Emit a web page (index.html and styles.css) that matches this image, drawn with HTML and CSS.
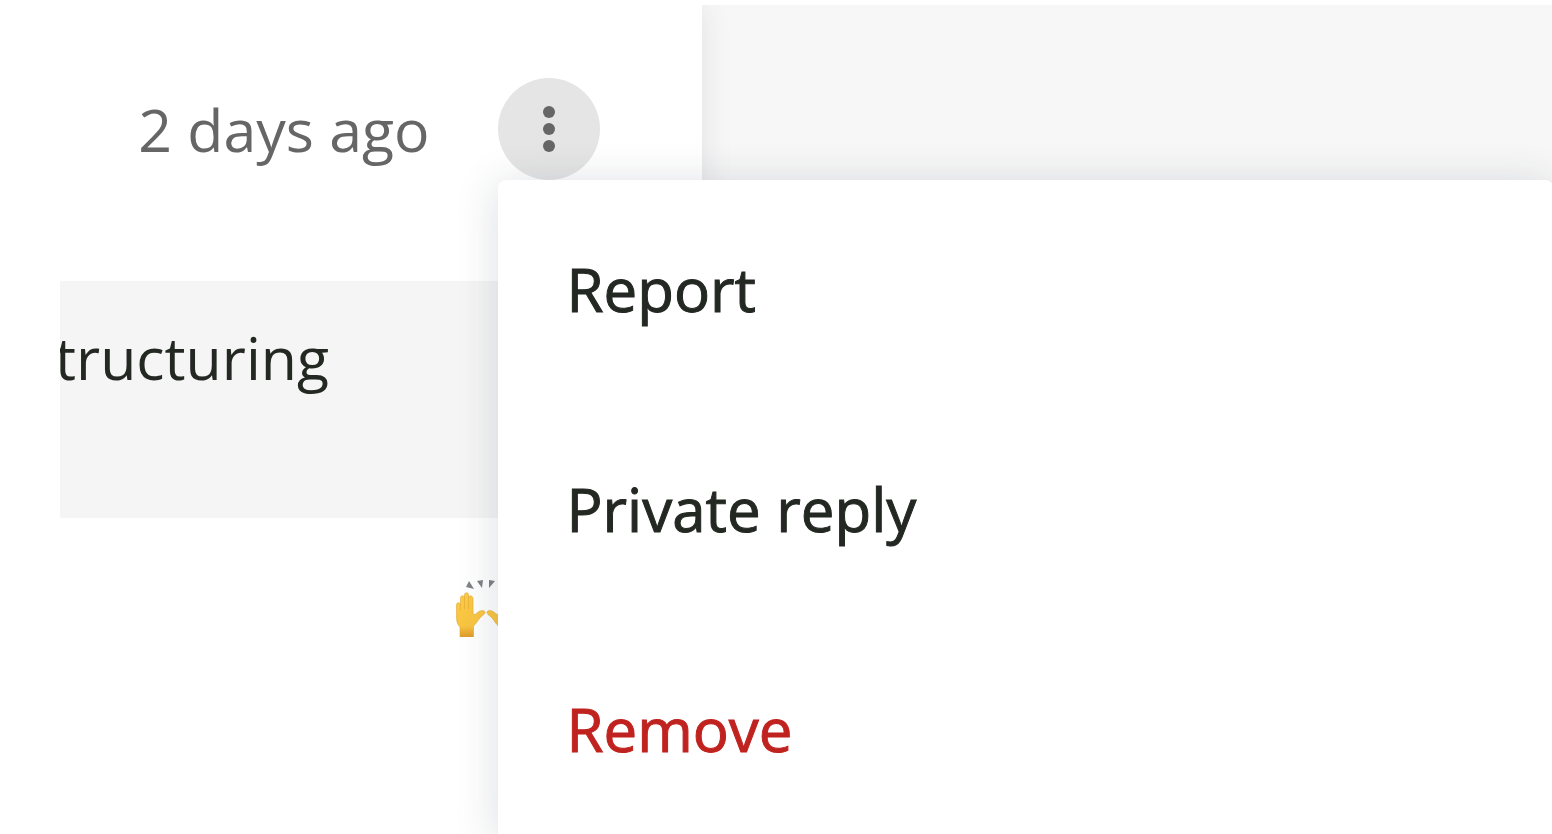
FILE: index.html
```
<!DOCTYPE html>
<html lang="en">
<head>
  <meta charset="UTF-8">
  <title>Comment menu</title>
  <link rel="stylesheet" href="styles.css">
</head>
<body>

  <main class="page">
    <article class="comment">
      <header class="comment-header">
        <time class="age">2 days ago</time>
        <div class="actions">
          <button class="more" type="button" aria-label="More actions" aria-haspopup="menu" aria-expanded="true">
            <svg width="102" height="102" viewBox="0 0 102 102" fill="#666">
              <circle cx="51" cy="34" r="6"/>
              <circle cx="51" cy="51" r="6"/>
              <circle cx="51" cy="68" r="6"/>
            </svg>
          </button>
          <div class="menu" role="menu">
            <button class="menu-item" type="button" role="menuitem">Report</button>
            <button class="menu-item" type="button" role="menuitem">Private reply</button>
            <button class="menu-item danger" type="button" role="menuitem">Remove</button>
          </div>
        </div>
      </header>

      <blockquote class="quote">tructuring</blockquote>

      <div class="reactions">
        <svg width="66" height="60" viewBox="0 0 66 60" role="img" aria-label="Raising hands">
          <defs>
            <linearGradient id="skin" x1="0" y1="0" x2="0" y2="1">
              <stop offset="0" stop-color="#fccb45"/>
              <stop offset="0.75" stop-color="#f9c542"/>
              <stop offset="1" stop-color="#dc9a2c"/>
            </linearGradient>
            <g id="hand">
              <path fill="url(#skin)" stroke="#e3a838" stroke-width="0.600" d="M4 60V50C1 47 0.500 44 0.500 39V28C0.500 25 4.500 25 4.500 28V21C4.500 18 8.500 18 8.500 21V18C8.500 15 12.500 15 12.500 18V21C12.500 18 17 18 17 22V35C17 38 19 38 21 36C23 34 26 33 28 34C30 35 29 37 26 39C23 41 21 46 17.500 49V60Z"/>
              <path fill="none" stroke="#e8b13a" stroke-width="0.800" d="M4.500 28V33M8.500 21V32M12.500 21V32"/>
            </g>
          </defs>
          <use href="#hand"/>
          <use href="#hand" transform="matrix(-1 0 0 1 60 0)"/>
          <path fill="#808285" d="M13 4L18 12L10 10ZM21 4L27 3L26 11ZM33 3L39 4L33 11ZM47 4L50 10L42 12Z"/>
        </svg>
      </div>
    </article>
    <aside class="side"></aside>
  </main>

</body>
</html>
```
FILE: styles.css
```
* { box-sizing: border-box; }
html, body { height: 100%; }
body { margin: 0; padding-top: 5px; overflow: hidden; background-color: #fff; color: #232823; font: 59px/80px "Open Sans", sans-serif; }
button { font: inherit; color: inherit; border: 0 none; cursor: pointer; }
svg { display: block; }

.page { display: flex; height: 100%; }
.comment { position: relative; width: 45.2%; padding: 73px 102px 0 60px; background-color: #fff; box-shadow: 0 0 30px rgba(30, 40, 60, 0.1); clip-path: inset(0 -100vw 0 0); }
.side { flex: 1; background-color: #f7f7f7; }

.comment-header { display: flex; align-items: center; justify-content: flex-end; gap: 68px; }
.age { color: #666; white-space: nowrap; }
.actions { position: relative; }
.more { display: block; padding: 0; border-radius: 50%; background-color: #e5e5e5; }

.quote { height: 237px; margin: 101px 0 0; padding: 36px 0; overflow: hidden; background-color: #f5f5f5; text-indent: -5px; }
.reactions { display: flex; justify-content: flex-end; padding: 59px 78px 0 0; }

.menu { position: absolute; z-index: 1; top: 100%; left: 0; width: 68vw; border-radius: 8px; background-color: #fff; box-shadow: 0 4px 44px rgba(30, 45, 65, 0.16); }
.menu-item { display: block; width: 100%; padding: 69px 69px 71px; background-color: transparent; font-size: 60px; text-align: left; -webkit-text-stroke: 1px currentColor; }
.menu-item:hover { background-color: #f4f4f4; }
.danger { color: #c0231f; }
```
